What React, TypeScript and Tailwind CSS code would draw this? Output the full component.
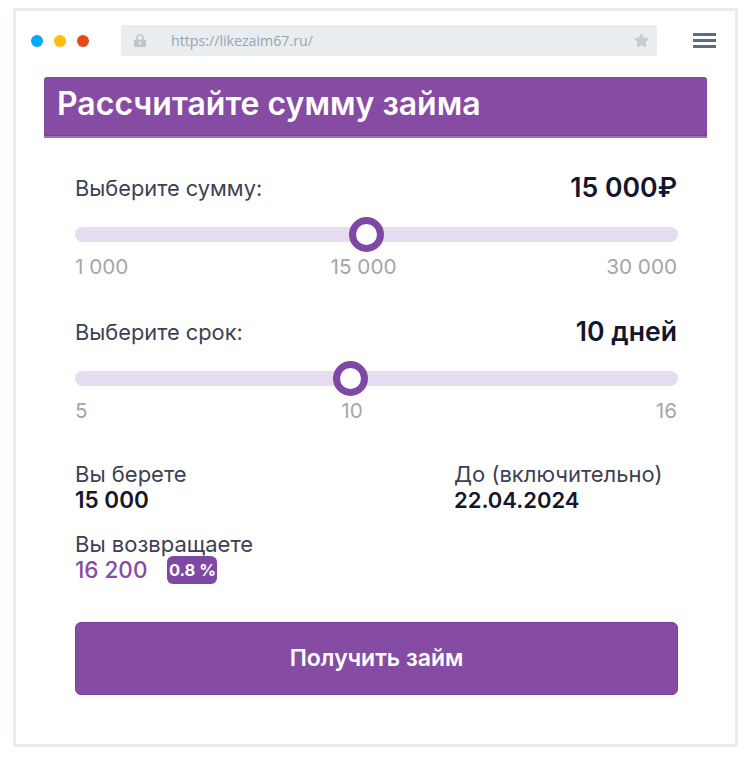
import React from 'react';
import { Star } from 'lucide-react';

interface SliderProps {
  label: string;
  value: string;
  thumb: number;
  marks: string[];
  markCenter: number;
}

const Slider: React.FC<SliderProps> = ({ label, value, thumb, marks, markCenter }) => (
  <div>
    <div className="flex items-center justify-between h-[28px]">
      <span className="text-[21.8px] leading-[28px] text-[#3d3f52]">{label}</span>
      <span className="text-[26.6px] leading-[28px] font-semibold text-[#14162b] -mt-[2px] mr-[1px]">{value}</span>
    </div>
    <div className="relative mt-[25px] h-[15px] rounded-full bg-[#e7dbef]">
      <div
        className="absolute top-[-10px] w-[35px] h-[35px] rounded-full border-[7px] border-[#7f48a5] bg-white"
        style={{ left: thumb - 17.5 }}
      />
    </div>
    <div className="relative mt-[11px] flex justify-between text-[20.7px] leading-[28px] text-[#a3a6ac] pr-[1px]">
      <span>{marks[0]}</span>
      <span className="absolute -translate-x-1/2" style={{ left: markCenter }}>{marks[1]}</span>
      <span>{marks[2]}</span>
    </div>
  </div>
);

const App: React.FC = () => {
  return (
    <div className="w-[751px] h-[763px] bg-white pt-[8px] pl-[13px] font-['Inter',sans-serif]">
      <div className="w-[725px] h-[739px] border-[3px] border-[#e9edf1] rounded-[2px] bg-white">
        {/* Browser toolbar */}
        <div className="flex items-center h-[59px] mb-[7px] pl-[15px]">
          <div className="flex items-center gap-[11px] w-[90px]">
            <span className="w-[12px] h-[12px] rounded-full bg-[#03a9f9]" />
            <span className="w-[12px] h-[12px] rounded-full bg-[#fdbd0b]" />
            <span className="w-[12px] h-[12px] rounded-full bg-[#e9481a]" />
          </div>
          <div className="flex items-center w-[536px] h-[31px] rounded-[3px] bg-[#e9edf0] pl-[13px] pr-[8px]">
            <svg width="12" height="13" viewBox="0 0 12 13" className="shrink-0 text-[#bcc6cc]" fill="currentColor">
              <path d="M6 0C3.8 0 2.2 1.6 2.2 3.8V5.5H1a1 1 0 0 0-1 1V12a1 1 0 0 0 1 1h10a1 1 0 0 0 1-1V6.5a1 1 0 0 0-1-1H9.8V3.8C9.8 1.6 8.2 0 6 0ZM3.9 5.5V3.8C3.9 2.5 4.7 1.6 6 1.6s2.1.9 2.1 2.2v1.7H3.9Z" />
              <circle cx="6" cy="9.2" r="1.3" fill="#e9edf0" />
            </svg>
            <span className="ml-[25px] text-[14.2px] text-[#97a5ae] font-['Open_Sans',sans-serif]">https://likezaim67.ru/</span>
            <Star size={15} className="ml-auto text-[#c3ccd2] fill-[#c3ccd2]" />
          </div>
          <div className="ml-[36px] flex flex-col gap-[3px] w-[23px]">
            <span className="h-[3px] bg-[#5d6c85]" />
            <span className="h-[3px] bg-[#5d6c85]" />
            <span className="h-[3px] bg-[#5d6c85]" />
          </div>
        </div>

        {/* Calculator card */}
        <div className="ml-[28px] w-[663px]">
          <div className="h-[61px] rounded-t-[3px] bg-[#864ca4] border-b-2 border-[#a06dbd] shadow-[inset_0_-1px_0_#7440a0] pl-[13px] flex items-center">
            <h1 className="text-[32px] leading-[36px] font-semibold text-white pb-[5px]">Рассчитайте сумму займа</h1>
          </div>

          <div className="pl-[31px] pr-[29px] pt-[36px]">
            <Slider label="Выберите сумму:" value="15 000₽" thumb={291.5} marks={['1 000', '15 000', '30 000']} markCenter={288.5} />
            <div className="mt-[37px]">
              <Slider label="Выберите срок:" value="10 дней" thumb={275} marks={['5', '10', '16']} markCenter={277} />
            </div>

            <div className="mt-[36px] flex">
              <div className="w-[379px]">
                <div className="text-[22px] leading-[26px] text-[#3d3f52]">Вы берете</div>
                <div className="text-[22.5px] leading-[26px] font-semibold text-[#14162b]">15 000</div>
              </div>
              <div>
                <div className="text-[22px] leading-[26px] text-[#3d3f52]">До (включительно)</div>
                <div className="text-[22px] leading-[26px] font-semibold text-[#14162b]">22.04.2024</div>
              </div>
            </div>

            <div className="mt-[18px]">
              <div className="text-[22px] leading-[26px] text-[#3d3f52]">Вы возвращаете</div>
              <div className="flex items-center h-[26px]">
                <span className="text-[22.5px] font-medium text-[#864ca4]">16 200</span>
                <span className="ml-[20px] h-[28px] w-[50px] rounded-[6px] bg-[#7f48a5] text-center text-[16.5px] leading-[28px] font-bold text-white">0.8 %</span>
              </div>
            </div>

            <button className="mt-[39px] block w-[603px] h-[73px] rounded-[6px] bg-[#864ca4] border border-[#7a3f9c] text-[23px] font-semibold text-white font-['Inter',sans-serif]">
              Получить займ
            </button>
          </div>
        </div>
      </div>
    </div>
  );
};

export default App;
